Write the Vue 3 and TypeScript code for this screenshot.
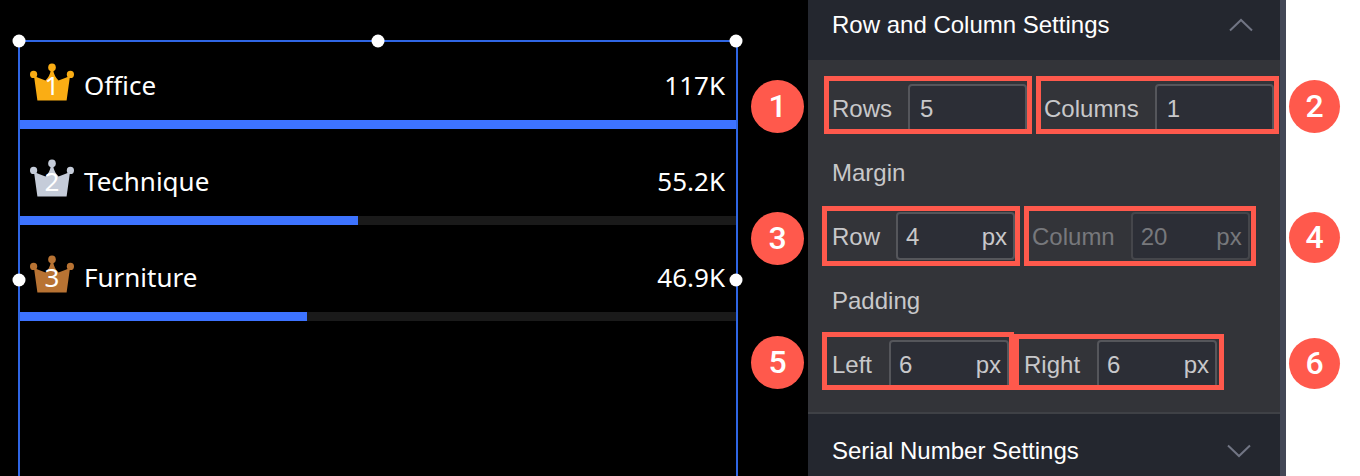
<script setup lang="ts">
import { reactive } from 'vue'

interface Item {
  rank: number
  tone: string
  name: string
  value: number
  text: string
}

interface Field {
  id: string
  label: string
  value: string
  unit?: string
  disabled?: boolean
  frame: string
}

interface Group {
  id: string
  title?: string
  fields: Field[]
}

const items: Item[] = [
  { rank: 1, tone: 'gold', name: 'Office', value: 117, text: '117K' },
  { rank: 2, tone: 'silver', name: 'Technique', value: 55.2, text: '55.2K' },
  { rank: 3, tone: 'bronze', name: 'Furniture', value: 46.9, text: '46.9K' },
]
const max = Math.max(...items.map((item) => item.value))

const handles = ['top-left', 'top-center', 'top-right', 'middle-left', 'middle-right']

const groups = reactive<Group[]>([
  {
    id: 'count',
    fields: [
      { id: 'rows', label: 'Rows', value: '5', frame: 'clipped' },
      { id: 'columns', label: 'Columns', value: '1', frame: 'clipped' },
    ],
  },
  {
    id: 'margin',
    title: 'Margin',
    fields: [
      { id: 'margin-row', label: 'Row', value: '4', unit: 'px', frame: 'inset' },
      { id: 'margin-column', label: 'Column', value: '20', unit: 'px', disabled: true, frame: 'roomy' },
    ],
  },
  {
    id: 'padding',
    title: 'Padding',
    fields: [
      { id: 'padding-left', label: 'Left', value: '6', unit: 'px', frame: 'clipped inset' },
      { id: 'padding-right', label: 'Right', value: '6', unit: 'px', frame: 'short inset' },
    ],
  },
])
</script>

<template>
  <main class="page">
    <section class="canvas">
      <div class="widget">
        <ol class="ranking">
          <li v-for="item in items" :key="item.rank" class="entry">
            <div class="entry-line">
              <span class="crown" :class="item.tone">
                <svg viewBox="0 0 44 38" aria-hidden="true">
                  <circle cx="3.6" cy="11.4" r="3.6" />
                  <circle cx="22" cy="4.4" r="3.8" />
                  <circle cx="40.4" cy="11.4" r="3.6" />
                  <path d="M4 13 Q10 15.500 15.500 17.500 Q20 13 20.800 7 H23.200 Q24 13 28.500 17.500 Q34 15.500 40 13 L36.600 37.500 H7.400 Z" />
                </svg>
                <span class="rank">{{ item.rank }}</span>
              </span>
              <span class="name">{{ item.name }}</span>
              <span class="value">{{ item.text }}</span>
            </div>
            <div class="track">
              <div class="fill" :style="{ width: (item.value / max) * 100 + '%' }"></div>
            </div>
          </li>
        </ol>
        <i v-for="handle in handles" :key="handle" class="handle" :class="handle"></i>
      </div>
      <div class="callouts">
        <span class="callout first">1</span>
        <span class="callout second">3</span>
        <span class="callout third">5</span>
      </div>
    </section>

    <aside class="panel">
      <button type="button" class="section-head open" aria-expanded="true">
        <span>Row and Column Settings</span>
        <svg class="chevron" viewBox="0 0 24 14" aria-hidden="true"><path d="M1 12.500 L12 2 L23 12.500" /></svg>
      </button>
      <div class="section-body">
        <div v-for="group in groups" :key="group.id" class="group" :class="group.id">
          <h3 v-if="group.title">{{ group.title }}</h3>
          <div class="fields">
            <div v-for="field in group.fields" :key="field.id" class="field" :class="[field.frame, { disabled: field.disabled }]">
              <label :for="field.id">{{ field.label }}</label>
              <span class="box">
                <input :id="field.id" v-model="field.value" type="text" :disabled="field.disabled" />
                <span v-if="field.unit" class="unit">{{ field.unit }}</span>
              </span>
            </div>
          </div>
        </div>
      </div>
      <button type="button" class="section-head closed" aria-expanded="false">
        <span>Serial Number Settings</span>
        <svg class="chevron" viewBox="0 0 24 14" aria-hidden="true"><path d="M1 1.500 L12 12 L23 1.500" /></svg>
      </button>
    </aside>

    <div class="callouts side">
      <span class="callout first">2</span>
      <span class="callout second">4</span>
      <span class="callout third">6</span>
    </div>
  </main>
</template>

<style>
body {
  margin: 0;
  background: #fff;
}
</style>

<style scoped>
.page {
  display: flex;
  height: 100vh;
  overflow: hidden;
  font-family: "Liberation Sans", Arial, sans-serif;
  font-size: 24px;
}

.canvas {
  flex: 1;
  min-width: 0;
  display: flex;
  align-items: flex-start;
  background: #000;
}

.widget {
  position: relative;
  box-sizing: border-box;
  flex: 1;
  min-width: 0;
  height: 480px;
  margin: 40px 13px 0 18px;
  border: 2px solid #2f66e4;
}

.ranking {
  display: flex;
  flex-direction: column;
  gap: 9px;
  margin: 0;
  padding: 0;
  list-style: none;
  color: #fff;
  font-family: "Noto Sans", sans-serif;
  font-size: 26px;
  line-height: 32px;
}

.entry-line {
  box-sizing: border-box;
  display: flex;
  align-items: flex-end;
  height: 78px;
  padding: 0 11px 19px 10px;
}

.crown {
  position: relative;
  width: 44px;
  height: 38px;
  margin-right: 10px;
}

.crown svg {
  display: block;
  width: 44px;
  height: 38px;
  fill: currentColor;
}

.gold { color: #faad14; }
.silver { color: #c5ccd9; }
.bronze { color: #b87333; }

.rank {
  position: absolute;
  inset: auto 0 0;
  color: #fff;
  text-align: center;
}

.name { flex: 1; }

.track {
  height: 9px;
  background: #1a1a1a;
}

.fill {
  height: 100%;
  background: #3d73ff;
}

.handle {
  position: absolute;
  width: 13px;
  height: 13px;
  border-radius: 50%;
  background: #fff;
  transform: translate(-50%, -50%);
}

.top-left { left: -1px; top: -1px; }
.top-center { left: 50%; top: -1px; }
.top-right { left: 100%; top: -1px; }
.middle-left { left: -1px; top: 50%; }
.middle-right { left: 100%; top: 50%; }

.callouts {
  display: flex;
  flex-direction: column;
  flex: none;
  width: 57px;
  padding-top: 80px;
}

.callout {
  width: 53px;
  height: 53px;
  border-radius: 50%;
  background: #ff594c;
  color: #fff;
  font-family: Roboto, "Liberation Sans", sans-serif;
  font-size: 32px;
  font-weight: 500;
  line-height: 53px;
  text-align: center;
}

.second { margin-top: 79px; }
.third { margin-top: 71px; }

.side {
  width: 71px;
  padding-left: 3px;
}

.side .callout {
  width: 51px;
}

.side .second,
.side .third {
  height: 51px;
  line-height: 51px;
}

.side .third { margin-top: 75px; }

.panel {
  flex: none;
  width: 472px;
  border-right: 6px solid #434756;
  background: #333439;
  color: #c8c8ca;
}

.section-head {
  box-sizing: border-box;
  display: flex;
  align-items: center;
  justify-content: space-between;
  width: 100%;
  border: 0;
  background: #24272f;
  color: #fff;
  font: inherit;
  line-height: 32px;
  text-align: left;
}

.section-head.open {
  height: 60px;
  padding: 0 27px 10px 24px;
}

.section-head.closed {
  height: 76px;
  padding: 0 29px 0 24px;
  border-top: 2px solid #3f4146;
}

.chevron {
  width: 24px;
  height: 14px;
  fill: none;
  stroke: #717584;
  stroke-width: 2;
}

.section-body {
  padding: 16px 0 22px 14px;
}

.count { padding-left: 2px; }
.margin { padding-top: 23px; }
.padding { padding-top: 19px; }

h3 {
  margin: 0 0 15px 10px;
  font-size: 24px;
  font-weight: 400;
  line-height: 32px;
}

.margin h3 { margin-bottom: 17px; }

.fields {
  display: flex;
  align-items: flex-end;
  gap: 4px;
}

.field {
  box-sizing: border-box;
  display: flex;
  align-items: flex-start;
  gap: 16px;
  height: 60px;
  padding: 1px 0 0 3px;
  border: 5px solid #ff594c;
  overflow: hidden;
  line-height: 50px;
}

.field.clipped {
  height: 58px;
  padding-top: 3px;
}

.field.short {
  height: 56px;
  padding-right: 2px;
}

.field.inset { padding-left: 5px; }
.field.roomy { padding-right: 1px; }

.box {
  box-sizing: border-box;
  display: flex;
  width: 119px;
  height: 48px;
  padding: 2px 6px 0 8px;
  border: 2px solid #55565b;
  border-radius: 4px;
  background: #2c2e36;
  line-height: 42px;
}

.count .box { padding-left: 10px; }

.padding .fields { gap: 0; }
.padding .field { gap: 17px; }
.padding .box { width: 120px; }

input {
  flex: 1;
  min-width: 0;
  width: 0;
  padding: 0;
  border: 0;
  outline: 0;
  background: none;
  color: inherit;
  font: inherit;
}

.disabled { color: #77787c; }
.disabled .box { border-color: #45464b; }
</style>
